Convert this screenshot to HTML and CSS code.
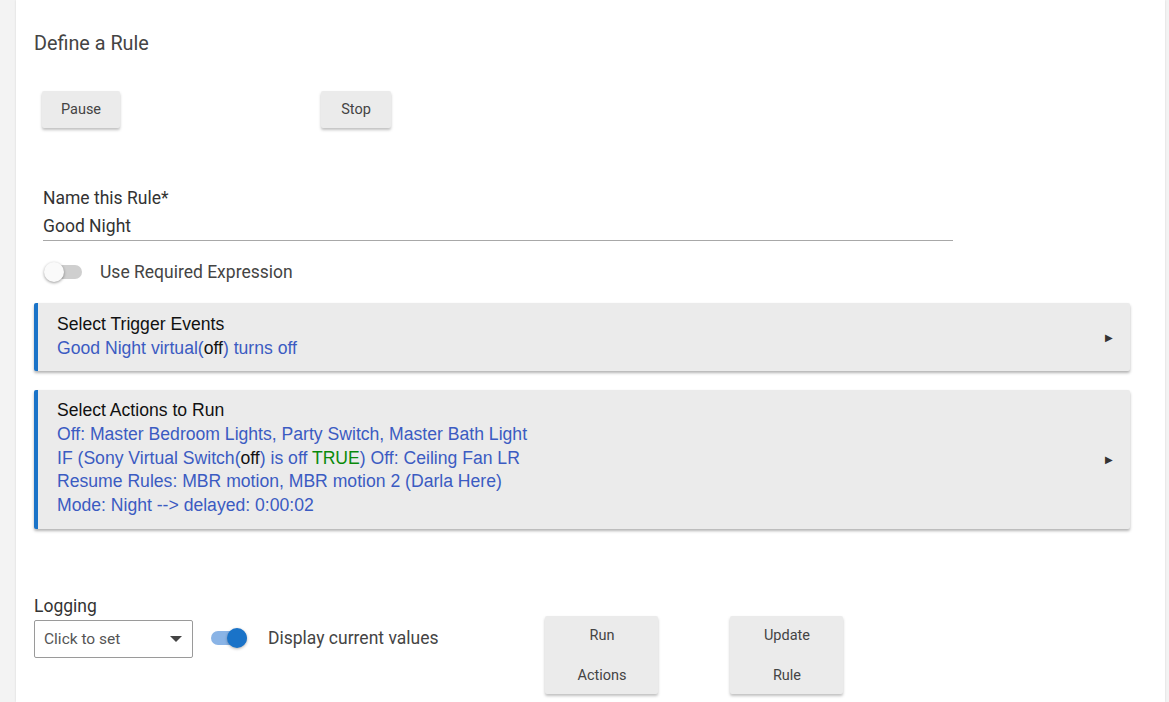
FILE: index.html
```html
<!DOCTYPE html>
<html lang="en">
<head>
    <meta charset="UTF-8">
    <title>Define a Rule</title>
    <link rel="stylesheet" href="styles.css">
</head>
<body>
    <div class="card">
        <div class="title">Define a Rule</div>
        <div class="top-buttons">
            <button class="button pause-button">Pause</button>
            <button class="button stop-button">Stop</button>
        </div>
        <div class="field">
            <div class="field-label">Name this Rule*</div>
            <div class="field-input">Good Night</div>
        </div>
        <div class="switch-row">
            <span class="switch"><span class="track"></span><span class="thumb"></span></span>
            <span class="switch-label">Use Required Expression</span>
        </div>
        <div class="section">
            <div class="section-body">
                <div class="section-title">Select Trigger Events</div>
                <div class="line">Good Night virtual(<span class="plain">off</span>) turns off</div>
            </div>
            <div class="arrow">&#9654;</div>
        </div>
        <div class="section actions">
            <div class="section-body">
                <div class="section-title">Select Actions to Run</div>
                <div class="line">Off: Master Bedroom Lights, Party Switch, Master Bath Light</div>
                <div class="line">IF (Sony Virtual Switch(<span class="plain">off</span>) is off <span class="true">TRUE</span>) Off: Ceiling Fan LR</div>
                <div class="line">Resume Rules: MBR motion, MBR motion 2 (Darla Here)</div>
                <div class="line">Mode: Night --&gt; delayed: 0:00:02</div>
            </div>
            <div class="arrow">&#9654;</div>
        </div>
        <div class="bottom">
            <div class="logging">
                <div class="logging-label">Logging</div>
                <div class="select">
                    <span>Click to set</span>
                    <span class="caret"></span>
                </div>
            </div>
            <div class="switch-row on">
                <span class="switch"><span class="track"></span><span class="thumb"></span></span>
                <span class="switch-label">Display current values</span>
            </div>
            <button class="button tall-button run-button">Run<br>Actions</button>
            <button class="button tall-button update-button">Update<br>Rule</button>
        </div>
    </div>
</body>
</html>
```

FILE: styles.css
```css
body {
    margin: 0;
    background: #f3f3f3;
    font-family: Roboto, "Liberation Sans", sans-serif;
    color: #333;
    overflow: hidden;
}
.card {
    margin: 0 4px 0 16px;
    background: #fff;
    height: 702px;
    padding: 32px 0 0 18px;
    box-sizing: border-box;
    box-shadow: 0 0 2px rgba(0, 0, 0, 0.12);
}
.title {
    font-size: 19.8px;
    line-height: 24px;
    color: #444;
}
.top-buttons {
    display: flex;
    margin: 35px 0 0 8px;
}
.button {
    font-family: Roboto, "Liberation Sans", sans-serif;
    font-size: 14.5px;
    color: #444;
    background: #ebebeb;
    border: none;
    border-radius: 2px;
    box-shadow: 0 2px 3px rgba(0, 0, 0, 0.25);
    height: 37px;
    padding: 0;
    cursor: pointer;
}
.pause-button {
    width: 78px;
}
.stop-button {
    width: 70px;
    margin-left: 201px;
}
.field {
    margin: 60px 0 0 9px;
    width: 910px;
}
.field-label {
    font-size: 17.5px;
    line-height: 20px;
    color: #333;
}
.field-input {
    font-size: 17.5px;
    line-height: 20px;
    color: #333;
    padding: 8px 0 4px;
    border-bottom: 1px solid #a8a8a8;
}
.switch-row {
    display: flex;
    align-items: center;
    margin: 11px 0 0 10px;
    height: 40px;
}
.switch {
    position: relative;
    width: 40px;
    height: 20px;
}
.track {
    position: absolute;
    left: 2px;
    top: 3px;
    width: 36px;
    height: 14px;
    border-radius: 7px;
    background: #cfcfcf;
}
.thumb {
    position: absolute;
    left: 0;
    top: 0;
    width: 20px;
    height: 20px;
    border-radius: 50%;
    background: #fafafa;
    box-shadow: 0 1px 3px rgba(0, 0, 0, 0.4);
}
.switch-label {
    margin-left: 16px;
    font-size: 17.5px;
    color: #444;
}
.section {
    display: flex;
    align-items: center;
    width: 1096px;
    margin-top: 11px;
    background: #ebebeb;
    border-left: 4px solid #1a73c8;
    border-radius: 2px;
    box-shadow: 0 2px 3px rgba(0, 0, 0, 0.3);
    box-sizing: border-box;
    font-family: "Liberation Sans", Arial, sans-serif;
    font-size: 17.6px;
}
.section-body {
    flex: 1;
    padding: 10px 0 11px 19px;
}
.actions {
    margin-top: 19px;
}
.actions .section-body {
    padding: 9px 0 11px 19px;
}
.section-title {
    color: #111;
    line-height: 23.5px;
}
.line {
    color: #3b5bc2;
    line-height: 23.5px;
}
.actions .line,
.actions .section-title {
    line-height: 23.8px;
}
.plain {
    color: #111;
}
.true {
    color: #0a8a0a;
}
.arrow {
    font-size: 10px;
    color: #333;
    margin-right: 17px;
}
.bottom {
    display: flex;
    align-items: flex-start;
    margin-top: 67px;
}
.logging-label {
    font-size: 17.5px;
    line-height: 20px;
    color: #333;
}
.select {
    display: flex;
    align-items: center;
    justify-content: space-between;
    width: 159px;
    height: 38px;
    margin-top: 4px;
    padding: 0 9px 0 9px;
    box-sizing: border-box;
    border: 1px solid #9a9a9a;
    border-radius: 2px;
    font-size: 15.5px;
    color: #555;
}
.caret {
    width: 0;
    height: 0;
    border-left: 6px solid transparent;
    border-right: 6px solid transparent;
    border-top: 6px solid #444;
    margin-right: 1px;
}
.bottom .switch-row {
    margin: 22px 0 0 16px;
    height: 40px;
}
.on .track {
    background: #8ab4e6;
}
.on .thumb {
    left: 18px;
    background: #1a73c8;
    box-shadow: 0 1px 3px rgba(0, 0, 0, 0.3);
}
.on .switch-label {
    margin-left: 19px;
}
.tall-button {
    width: 113px;
    height: 78px;
    line-height: 40px;
    margin-top: 20px;
}
.run-button {
    margin-left: 107px;
}
.update-button {
    margin-left: 72px;
}
```
